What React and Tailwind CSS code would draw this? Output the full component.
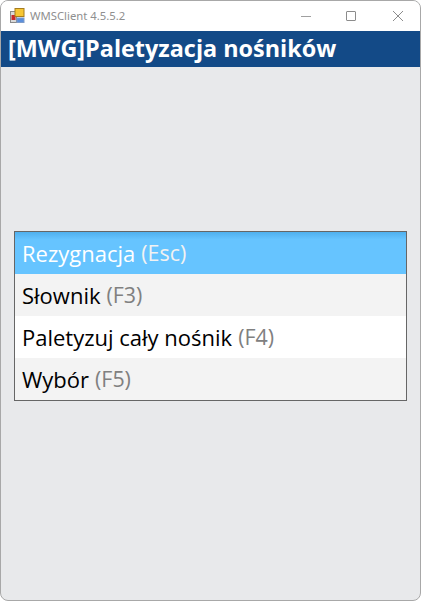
import React from 'react';

const options = [
  { label: 'Rezygnacja', shortcut: '(Esc)', rowClass: 'bg-gradient-to-b from-[#4fb0ee] to-[#66c4ff] to-[18%] text-white', keyClass: 'text-[#f2f2f2]' },
  { label: 'Słownik', shortcut: '(F3)', rowClass: 'bg-[#f3f3f3] text-black', keyClass: 'text-[#808080]' },
  { label: 'Paletyzuj cały nośnik', shortcut: '(F4)', rowClass: 'bg-white text-black', keyClass: 'text-[#808080]' },
  { label: 'Wybór', shortcut: '(F5)', rowClass: 'bg-[#f3f3f3] text-black', keyClass: 'text-[#808080]' }
];

const AppIcon = () => (
  <svg width="16" height="16" viewBox="0 0 16 16" className="shrink-0">
    <rect x="0.5" y="3.5" width="6" height="11" fill="#d9d9d9" stroke="#8a8a8a" />
    <rect x="1.5" y="7" width="4" height="5" fill="#c8282c" />
    <rect x="5" y="0.5" width="9" height="8" fill="#f6c634" stroke="#a67c1e" />
    <rect x="7" y="10" width="7" height="4.5" fill="#5b8fdc" stroke="#7f9cc8" />
  </svg>
);

const App = () => {
  return (
    <div className="w-[421px] h-[601px] flex flex-col overflow-hidden bg-[#e8e9eb] border border-[#a8a8a8] rounded-[8px] font-['Open_Sans','Noto_Sans',sans-serif]">
      {/* Title bar */}
      <div className="h-[30px] shrink-0 flex items-center bg-white pl-[9px]">
        <AppIcon />
        <span className="ml-[4px] text-[11.3px] text-[#8f8f8f] font-['Noto_Sans',sans-serif]">WMSClient 4.5.5.2</span>
        <div className="ml-auto flex items-center">
          <div className="w-[42px] flex justify-center">
            <div className="w-[10px] h-px bg-[#a0a0a0]"></div>
          </div>
          <div className="w-[48px] flex justify-center">
            <div className="w-[10px] h-[10px] border border-[#8c8c8c] rounded-[1px]"></div>
          </div>
          <div className="w-[45px] flex justify-center">
            <svg width="10" height="10" viewBox="0 0 10 10" fill="none" stroke="#8c8c8c" strokeWidth="1">
              <path d="M0 0L10 10M10 0L0 10" />
            </svg>
          </div>
        </div>
      </div>

      {/* Header */}
      <div className="h-[36px] shrink-0 flex items-center bg-[#134a87] pl-[7px]">
        <h1 className="text-[23.4px] leading-none font-bold text-white whitespace-nowrap">[MWG]Paletyzacja nośników</h1>
      </div>

      {/* Menu */}
      <div className="flex-1 px-[13px] pt-[164px]">
        <div className="border border-[#666666]">
          {options.map((option) => (
            <div key={option.label} className={`h-[42px] flex items-center pl-[7px] text-[22px] whitespace-nowrap ${option.rowClass}`}>
              <span>{option.label}</span>
              <span className={`ml-[6px] text-[21.4px] ${option.keyClass}`}>{option.shortcut}</span>
            </div>
          ))}
        </div>
      </div>
    </div>
  );
};

export default App;
